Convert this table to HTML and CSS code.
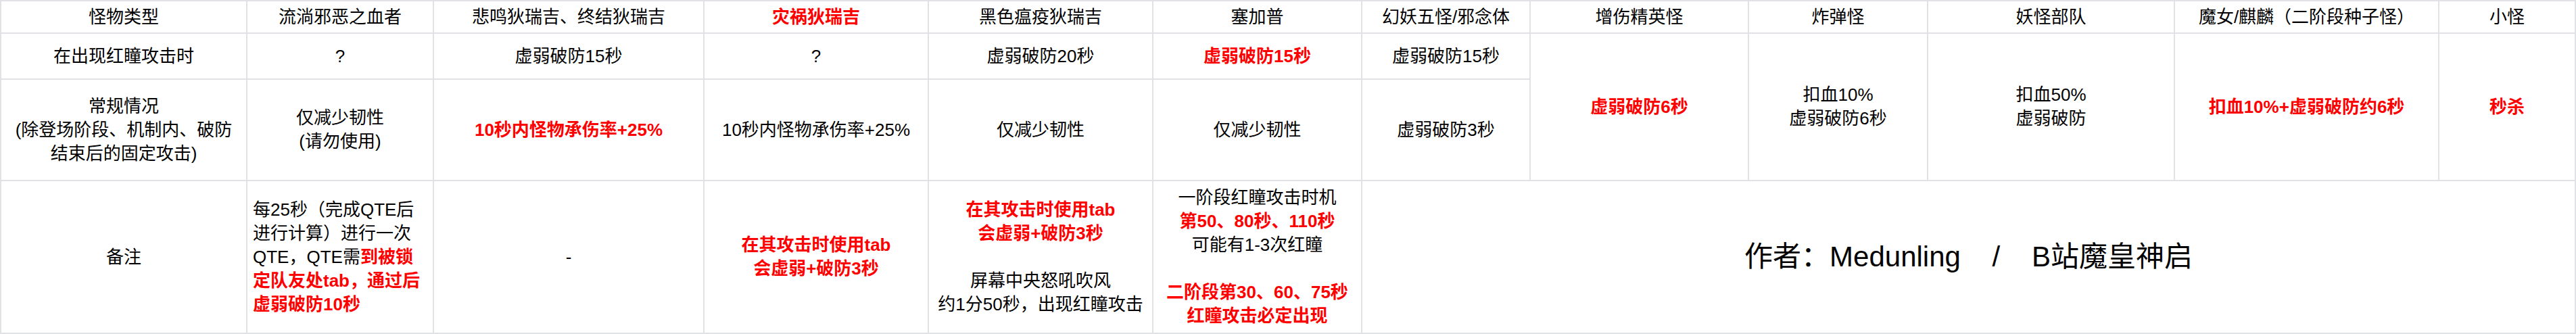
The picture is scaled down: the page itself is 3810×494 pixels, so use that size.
FILE: index.html
```html
<!DOCTYPE html>
<html lang="zh-CN">
<head>
<meta charset="utf-8">
<title>怪物类型 红瞳攻击</title>
<link rel="stylesheet" href="styles.css">
</head>
<body>
<div class="sheet">
  <div class="cell"><p>怪物类型</p></div>
  <div class="cell"><p>流淌邪恶之血者</p></div>
  <div class="cell"><p>悲鸣狄瑞吉、终结狄瑞吉</p></div>
  <div class="cell"><p><strong class="hl">灾祸狄瑞吉</strong></p></div>
  <div class="cell"><p>黑色瘟疫狄瑞吉</p></div>
  <div class="cell"><p>塞加普</p></div>
  <div class="cell"><p>幻妖五怪/邪念体</p></div>
  <div class="cell"><p>增伤精英怪</p></div>
  <div class="cell"><p>炸弹怪</p></div>
  <div class="cell"><p>妖怪部队</p></div>
  <div class="cell"><p>魔女/麒麟（二阶段种子怪）</p></div>
  <div class="cell"><p>小怪</p></div>

  <div class="cell"><p>在出现红瞳攻击时</p></div>
  <div class="cell"><p>?</p></div>
  <div class="cell"><p>虚弱破防15秒</p></div>
  <div class="cell"><p>?</p></div>
  <div class="cell"><p>虚弱破防20秒</p></div>
  <div class="cell"><p><strong class="hl">虚弱破防15秒</strong></p></div>
  <div class="cell"><p>虚弱破防15秒</p></div>
  <div class="cell tall"><p><strong class="hl">虚弱破防6秒</strong></p></div>
  <div class="cell tall"><p>扣血10%<br>虚弱破防6秒</p></div>
  <div class="cell tall"><p>扣血50%<br>虚弱破防</p></div>
  <div class="cell tall"><p><strong class="hl">扣血10%+虚弱破防约6秒</strong></p></div>
  <div class="cell tall"><p><strong class="hl">秒杀</strong></p></div>

  <div class="cell"><p>常规情况<br>(除登场阶段、机制内、破防<br>结束后的固定攻击)</p></div>
  <div class="cell"><p>仅减少韧性<br>(请勿使用)</p></div>
  <div class="cell"><p><strong class="hl">10秒内怪物承伤率+25%</strong></p></div>
  <div class="cell"><p>10秒内怪物承伤率+25%</p></div>
  <div class="cell"><p>仅减少韧性</p></div>
  <div class="cell"><p>仅减少韧性</p></div>
  <div class="cell"><p>虚弱破防3秒</p></div>

  <div class="cell"><p>备注</p></div>
  <div class="cell left"><p>每25秒（完成QTE后<br>进行计算）进行一次<br>QTE，QTE需<strong class="hl">到被锁<br>定队友处tab，通过后<br>虚弱破防10秒</strong></p></div>
  <div class="cell"><p>-</p></div>
  <div class="cell"><p><strong class="hl">在其攻击时使用tab<br>会虚弱+破防3秒</strong></p></div>
  <div class="cell"><p><strong class="hl">在其攻击时使用tab<br>会虚弱+破防3秒</strong><br><br>屏幕中央怒吼吹风<br>约1分50秒，出现红瞳攻击</p></div>
  <div class="cell"><p>一阶段红瞳攻击时机<br><strong class="hl">第50、80秒、110秒</strong><br>可能有1-3次红瞳<br><br><strong class="hl">二阶段第30、60、75秒<br>红瞳攻击必定出现</strong></p></div>
  <div class="cell wide author"><p>作者：Medunling    /    B站魔皇神启</p></div>
</div>
</body>
</html>
```

FILE: styles.css
```css
html, body {
  margin: 0;
  padding: 0;
  background: #ffffff;
}

body {
  font-family: "Liberation Sans", "Noto Sans CJK SC", sans-serif;
  font-size: 26px;
  line-height: 35px;
  color: #000000;
}

.sheet {
  box-sizing: border-box;
  width: 3810px;
  height: 494px;
  display: grid;
  grid-template-columns: 362px 274px 398px 330px 330px 307px 247px 321px 263px 363px 389px 200px;
  grid-template-rows: 46px 66px 148px 224px;
  gap: 2px;
  padding: 2px;
  background: #e1e2e6;
}

.cell {
  background: #ffffff;
  display: flex;
  align-items: center;
  justify-content: center;
  text-align: center;
  white-space: nowrap;
  overflow: hidden;
}

.cell p {
  margin: 0;
}

.tall {
  grid-row: span 2;
}

.wide {
  grid-column: span 6;
}

.left {
  justify-content: flex-start;
  text-align: left;
  padding-left: 8px;
}

.hl {
  color: #ff0000;
  font-weight: 700;
}

.author {
  font-size: 42px;
  line-height: 50px;
  white-space: pre;
}
```
